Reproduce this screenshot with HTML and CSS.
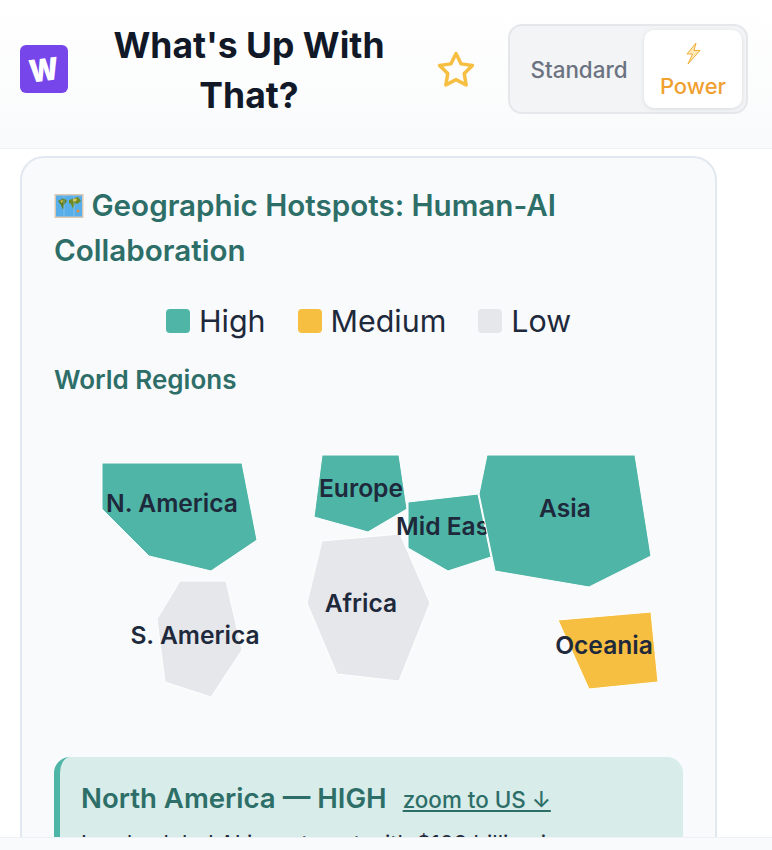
FILE: index.html
```html
<!DOCTYPE html>
<html lang="en">
<head>
    <meta charset="UTF-8">
    <meta name="viewport" content="width=device-width, initial-scale=1.0">
    <title>What's Up With That?</title>
    <link rel="stylesheet" href="styles.css">
</head>
<body>
    <header class="header">
        <div class="logo"><span class="logo-letter">W</span></div>
        <h1 class="title">What's Up With That?</h1>
        <svg class="star" viewBox="0 0 24 24" width="42" height="42" fill="none" stroke="#f6bf41" stroke-width="2" stroke-linejoin="round">
            <path d="M12 2.6l2.9 5.9 6.5.95-4.7 4.6 1.1 6.5L12 17.5l-5.8 3.05 1.1-6.5-4.7-4.6 6.5-.95z"/>
        </svg>
        <div class="mode-toggle">
            <div class="mode-btn">Standard</div>
            <div class="mode-btn mode-btn-active">
                <svg class="bolt" viewBox="0 0 18 23" width="18" height="23">
                    <path d="M12 1L3 12h5.5L4 22 16 8.5h-6z" fill="#fde9b5" stroke="#f2ad3d" stroke-width="1" stroke-linejoin="round"/>
                </svg>
                <span>Power</span>
            </div>
        </div>
    </header>

    <main class="main">
        <section class="card">
            <h2 class="card-title">
                <svg class="map-icon" viewBox="0 0 30 26" width="30" height="26">
                    <rect x="0.5" y="1" width="29" height="24" fill="#dcc9b4"/>
                    <rect x="2" y="2.5" width="26" height="21" fill="#58aee8"/>
                    <path d="M4 8l6-3 3 3-3 4-1 5-2-5z" fill="#5e7d22"/>
                    <path d="M15 7l9-3 3 4-4 3-2-1-2 6-2-5-2-1z" fill="#6e8a24"/>
                    <path d="M19 6l4-.5-1 3-3-.5zM6 8l3-1-1 3z" fill="#e6c94a"/>
                    <circle cx="24" cy="18" r="1.5" fill="#e9913a"/>
                    <path d="M10 2.5v21M20 2.5v21" stroke="#9fd0f0" stroke-width="0.8" opacity="0.7"/>
                </svg>
                Geographic Hotspots: Human-AI Collaboration
            </h2>

            <div class="legend">
                <div class="legend-item"><span class="swatch swatch-high"></span>High</div>
                <div class="legend-item"><span class="swatch swatch-medium"></span>Medium</div>
                <div class="legend-item"><span class="swatch swatch-low"></span>Low</div>
            </div>

            <h3 class="map-title">World Regions</h3>

            <svg class="world-map" viewBox="0 0 629 308" width="629" height="308">
                <polygon class="region high" points="48,54 188,54 203,131 157,162 95,147 48,100"/>
                <text class="region-label" x="118" y="103">N. America</text>

                <polygon class="region low" points="126,172 172,172 188,241 157,288 111,273 103,210"/>
                <text class="region-label" x="141" y="235">S. America</text>

                <polygon class="region high" points="268,46 345,46 353,100 314,123 260,108"/>
                <text class="region-label" x="307" y="88">Europe</text>

                <polygon class="region low" points="268,132 346,125 376,194 345,272 283,265 253,194"/>
                <text class="region-label" x="307" y="203">Africa</text>

                <polygon class="region high" points="354,93 424,85 437,148 394,162 354,139"/>
                <text class="region-label" x="393" y="126">Mid East</text>

                <polygon class="region high" points="433,46 581,46 597,147 535,178 441,162 425,85"/>
                <text class="region-label" x="511" y="108">Asia</text>

                <polygon class="region medium" points="504,211 597,203 604,273 535,280"/>
                <text class="region-label" x="550" y="245">Oceania</text>
            </svg>

            <div class="region-detail">
                <div class="detail-head">
                    <span class="detail-name">North America — HIGH</span>
                    <a class="detail-link" href="#">zoom to US ↓</a>
                </div>
                <p class="detail-text">Leads global AI investment with $109 billion in</p>
            </div>
        </section>
    </main>

    <div class="bottom-bar"></div>
</body>
</html>
```

FILE: styles.css
```css
:root {
    --teal: #4fb5a6;
    --teal-dark: #2d6f68;
    --amber: #f6bf41;
    --grey: #e5e7eb;
    --ink: #1e293b;
}

* {
    margin: 0;
    padding: 0;
    box-sizing: border-box;
}

html, body {
    height: 850px;
    overflow: hidden;
}

body {
    font-family: Inter, "Liberation Sans", sans-serif;
    background-color: #fff;
    color: var(--ink);
}

/* header */
.header {
    display: flex;
    align-items: center;
    height: 149px;
    padding: 0 24px 10px 20px;
    background: linear-gradient(#fff, #f9fafb);
    border-bottom: 1px solid #f0f1f4;
}

.logo {
    flex: none;
    display: flex;
    align-items: center;
    justify-content: center;
    width: 48px;
    height: 48px;
    border-radius: 6px;
    background-color: #7646ea;
}

.logo-letter {
    color: #fff;
    font-size: 31px;
    font-weight: 900;
    line-height: 1;
    transform: rotate(-7deg) scaleX(0.88);
}

.title {
    width: 320px;
    margin: 3px 28px 0 23px;
    color: #111827;
    font-size: 35.5px;
    font-weight: 700;
    line-height: 50px;
    text-align: center;
}

.star {
    flex: none;
    margin-top: 2px;
}

.mode-toggle {
    flex: none;
    display: flex;
    align-items: center;
    width: 240px;
    height: 90px;
    margin-left: 31px;
    padding: 4px;
    border: 2px solid var(--grey);
    border-radius: 14px;
    background-color: #f3f4f6;
}

.mode-btn {
    flex: 1;
    color: #6b7280;
    font-size: 22.4px;
    font-weight: 500;
    text-align: center;
}

.mode-btn-active {
    flex: none;
    display: flex;
    flex-direction: column;
    align-items: center;
    justify-content: center;
    gap: 8px;
    width: 98px;
    height: 78px;
    padding-top: 2px;
    border-radius: 10px;
    background-color: #fff;
    color: #f0a030;
    font-size: 22px;
    box-shadow: 0 1px 4px rgba(0,0,0,0.1);
}

.bolt {
    display: block;
}

/* main card */
.main {
    padding: 7px 55px 0 20px;
}

.card {
    height: 760px;
    padding: 25px 32px;
    border: 2px solid #e2e8f0;
    border-radius: 24px;
    background-color: #f8fafc;
}

.card-title {
    color: var(--teal-dark);
    font-size: 29.6px;
    font-weight: 600;
    line-height: 45px;
}

.map-icon {
    vertical-align: -3px;
}

.legend {
    display: flex;
    justify-content: center;
    gap: 32px;
    margin-top: 26px;
}

.legend-item {
    display: flex;
    align-items: center;
    gap: 9px;
    font-size: 30.4px;
    line-height: 44px;
}

.swatch {
    width: 24px;
    height: 24px;
    border-radius: 4px;
}

.swatch-high { background-color: var(--teal); }
.swatch-medium { background-color: var(--amber); }
.swatch-low { background-color: var(--grey); }

.map-title {
    margin-top: 22px;
    color: var(--teal-dark);
    font-size: 26px;
    font-weight: 600;
    line-height: 30px;
}

.world-map {
    display: block;
    margin-top: 14px;
}

.region {
    stroke: #fff;
    stroke-width: 1;
}

.region.high { fill: var(--teal); }
.region.medium { fill: var(--amber); }
.region.low { fill: var(--grey); }

.region-label {
    fill: var(--ink);
    font-size: 24.6px;
    font-weight: 600;
    text-anchor: middle;
}

/* detail box */
.region-detail {
    margin-top: 40px;
    padding: 24px 21px;
    border-left: 6px solid var(--teal);
    border-radius: 16px;
    background-color: #d8ecea;
}

.detail-head {
    display: flex;
    align-items: baseline;
    gap: 16px;
}

.detail-name {
    color: var(--teal-dark);
    font-size: 27.6px;
    font-weight: 600;
}

.detail-link {
    color: var(--teal-dark);
    font-size: 22.4px;
    font-weight: 500;
}

.detail-text {
    margin-top: 15px;
    font-size: 22px;
}

.bottom-bar {
    position: fixed;
    left: 0;
    right: 0;
    bottom: 0;
    height: 13px;
    background-color: #f9fafb;
    border-top: 1px solid #f0f1f4;
}
```
